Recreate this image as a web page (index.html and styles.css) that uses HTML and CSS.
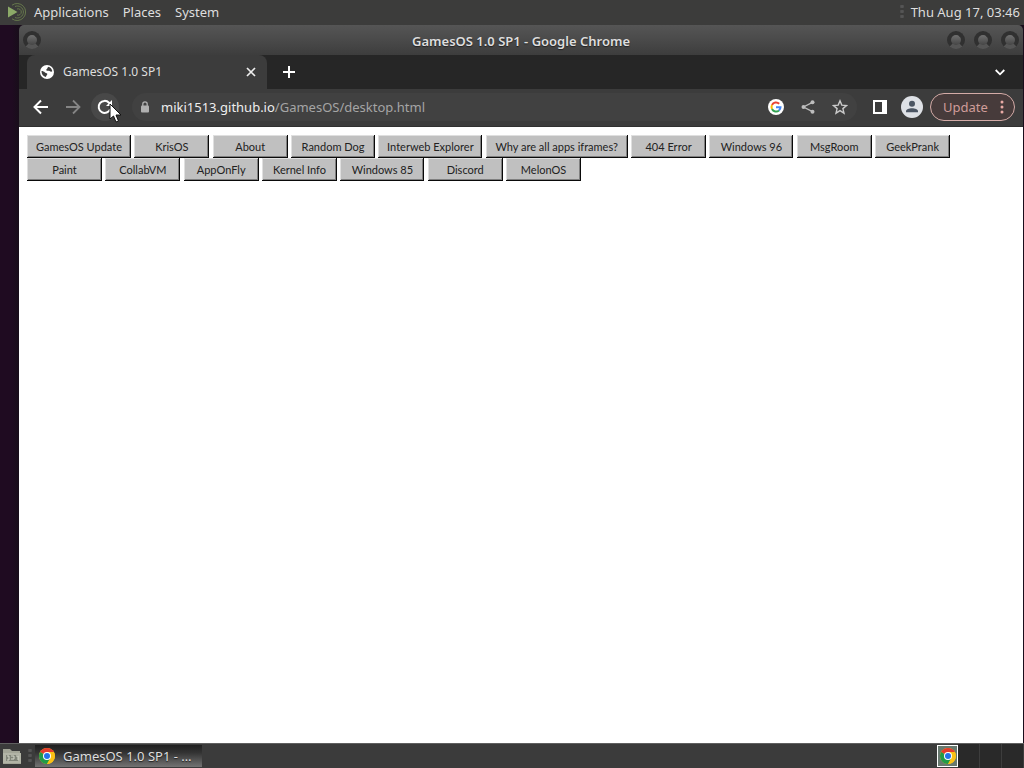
FILE: index.html
```html
<!DOCTYPE html>
<html lang="en">
<head>
<meta charset="utf-8">
<title>GamesOS 1.0 SP1</title>
<link rel="stylesheet" href="styles.css">
</head>
<body>
<svg width="0" height="0" class="defs" aria-hidden="true">
  <symbol id="chrome" viewBox="0 0 16 16">
    <circle cx="8" cy="8" r="8" fill="#fbc116"/>
    <path d="M8 8 1.1 4A8 8 0 0 1 14.9 4Z" fill="#e33b2e"/>
    <path d="M1.1 4A8 8 0 0 0 8 16L11.4 10 8 8Z" fill="#229a48"/>
    <path d="M8 4h6.9A8 8 0 0 1 8 16l3.5-6Z" fill="#fbc116"/>
    <circle cx="8" cy="8" r="4" fill="#fff"/>
    <circle cx="8" cy="8" r="3" fill="#2472e8"/>
  </symbol>
</svg>
<header class="panel">
  <nav class="menus">
    <svg class="mate" width="20" height="20" viewBox="0 0 20 20" fill="none" stroke="#66784c" stroke-width="1"><path d="M1 4.500 10.500 10 1 15.500Z" fill="#8caa68" stroke="none"/><path d="M5 3.200A8.500 8.500 0 1 1 5 16.800M8 4.500A6 6 0 1 1 8 15.500M10 7A3.200 3.200 0 1 1 10 13"/></svg>
    <button>Applications</button><button>Places</button><button>System</button>
  </nav>
  <div class="clock"><span class="grip"></span><time>Thu Aug 17, 03:46</time></div>
</header>
<main class="desktop">
  <section class="window">
    <div class="titlebar">
      <div class="side"><button class="knob" aria-label="Window menu"></button></div>
      <h1>GamesOS 1.0 SP1 - Google Chrome</h1>
      <div class="side right"><button class="knob" aria-label="Minimize"></button><button class="knob" aria-label="Maximize"></button><button class="knob" aria-label="Close"></button></div>
    </div>
    <div class="tabs">
      <div class="tab">
        <svg width="14" height="14" viewBox="0 0 14 14"><circle cx="7" cy="7" r="7" fill="#fff"/><path d="M1.500 6C3 6 4 6.500 5 7.500s2.500.2 2.300 1.700S6 10 6 12C3 11.500 1.500 9 1.500 6ZM8 1.700c2.500.4 4 2.300 4.300 4.600-1 .9-2 .2-2.700-.3S7 6.200 6.300 5.300 7.800 3.500 8 1.700Z" fill="#3c3c3c"/></svg>
        <span>GamesOS 1.0 SP1</span>
        <button class="icon" aria-label="Close tab"><svg width="10" height="10" viewBox="0 0 10 10" stroke="#eee" stroke-width="1.700"><path d="M1 1l8 8M9 1 1 9"/></svg></button>
      </div>
      <button class="icon plus" aria-label="New tab"><svg width="12" height="12" viewBox="0 0 12 12" stroke="#fff" stroke-width="2"><path d="M6 0v12M0 6h12"/></svg></button>
      <button class="icon chevron" aria-label="Search tabs"><svg width="10" height="7" viewBox="0 0 10 7" fill="none" stroke="#fff" stroke-width="1.800"><path d="m.7 1 4.300 4.300L9.300 1"/></svg></button>
    </div>
    <div class="toolbar">
      <button class="icon" aria-label="Back"><svg width="16" height="16" viewBox="0 0 16 16" fill="none" stroke="#fff" stroke-width="2"><path d="M15 8H2M8 1.500 1.500 8 8 14.500"/></svg></button>
      <button class="icon" aria-label="Forward"><svg width="16" height="16" viewBox="0 0 16 16" fill="none" stroke="#858585" stroke-width="1.800"><path d="M1 8h13M8 1.500 14.500 8 8 14.500"/></svg></button>
      <button class="icon reload" aria-label="Reload"><svg width="16" height="16" viewBox="0 0 16 16" fill="none" stroke="#fff" stroke-width="2"><path d="M13.300 10A6 6 0 1 1 12 3.700l1 1.200"/><path d="M15 1v6H9Z" fill="#fff" stroke="none"/></svg>
        <svg class="cursor" width="16" height="22" viewBox="0 0 16 22"><path d="M1 1v15l3.500-3 2.500 6 2.500-1L7 12h5Z" fill="#fff" stroke="#111"/></svg></button>
      <div class="omnibox">
        <svg width="10" height="12" viewBox="0 0 10 12" fill="none"><rect x="1" y="4.500" width="8" height="7" rx="1" fill="#b0b0b0"/><path d="M2.800 5V3a2.200 2.200 0 0 1 4.400 0v2" stroke="#b0b0b0" stroke-width="1.300"/></svg>
        <a class="url" href="#">miki1513.github.io<span>/GamesOS/desktop.html</span></a>
        <button class="icon" aria-label="Google"><svg width="16" height="16" viewBox="0 0 16 16" fill="none" stroke-width="2"><circle cx="8" cy="8" r="8" fill="#fff"/><path d="M11.200 4.800A4.500 4.500 0 0 0 4 6" stroke="#e94235"/><path d="M4 6a4.500 4.500 0 0 0 0 4" stroke="#fabb05"/><path d="M4 10a4.500 4.500 0 0 0 7 1.400" stroke="#34a353"/><path d="M8 8.200h4.500a4.500 4.500 0 0 1-1.500 3.200" stroke="#4285f4"/></svg></button>
        <button class="icon" aria-label="Share"><svg width="14" height="14" viewBox="0 0 14 14" fill="#bdbdbd"><path d="M11.500 2.300 2.500 7l9 4.700" fill="none" stroke="#bdbdbd" stroke-width="1.300"/><circle cx="11.500" cy="2.300" r="2"/><circle cx="2.500" cy="7" r="2"/><circle cx="11.500" cy="11.700" r="2"/></svg></button>
        <button class="icon" aria-label="Bookmark"><svg width="16" height="16" viewBox="0 0 16 16" fill="none" stroke="#cacaca" stroke-width="1.400"><path d="m8 1.800 1.800 4.300 4.700.4-3.600 3.100 1.100 4.600L8 11.700l-4 2.500 1.100-4.600L1.500 6.500l4.700-.4Z"/></svg></button>
      </div>
      <button class="icon" aria-label="Side panel"><svg width="14" height="14" viewBox="0 0 14 14"><path fill="#fff" fill-rule="evenodd" d="M0 0h14v14H0ZM2 2v10h7V2Z"/></svg></button>
      <button class="icon" aria-label="Profile"><svg width="22" height="22" viewBox="0 0 22 22"><circle cx="11" cy="11" r="11" fill="#dee1e6"/><circle cx="11" cy="7.800" r="3" fill="#4b5563"/><path d="M5 16.300v-1.100c0-4 12-4 12 0v1.100Z" fill="#4b5563"/></svg></button>
      <button class="update">Update <svg width="4" height="14" viewBox="0 0 4 14" fill="#e9aaa5"><circle cx="2" cy="2" r="1.500"/><circle cx="2" cy="7" r="1.500"/><circle cx="2" cy="12" r="1.500"/></svg></button>
    </div>
    <div class="page">
      <button class="app wide">GamesOS Update</button>
      <button class="app">KrisOS</button>
      <button class="app">About</button>
      <button class="app medium">Random Dog</button>
      <button class="app wide">Interweb Explorer</button>
      <button class="app widest">Why are all apps iframes?</button>
      <button class="app">404 Error</button>
      <button class="app medium">Windows 96</button>
      <button class="app">MsgRoom</button>
      <button class="app">GeekPrank</button>
      <button class="app">Paint</button>
      <button class="app">CollabVM</button>
      <button class="app">AppOnFly</button>
      <button class="app">Kernel Info</button>
      <button class="app medium">Windows 85</button>
      <button class="app">Discord</button>
      <button class="app">MelonOS</button>
    </div>
  </section>
</main>
<footer class="taskbar">
  <button class="icon files" aria-label="Show desktop"><svg width="20" height="18" viewBox="0 0 20 18"><path d="M1 2h7l2 2h8v3h1v10H1Z" fill="#a3a597"/><path d="M1 6h18v10H1Z" fill="#b2b4a6"/><path d="M4 8h12v6H4Z" fill="#818579"/><path d="M5 9h2v4H5m4-4h3v3H9m5-3h2v4" fill="none" stroke="#d4d6c9"/></svg></button>
  <span class="grip"></span>
  <button class="task"><svg width="16" height="16"><use href="#chrome"/></svg><span>GamesOS 1.0 SP1 - …</span></button>
  <button class="tray" aria-label="Google Chrome"><svg width="16" height="16"><use href="#chrome"/></svg></button>
  <div class="spaces"><i></i><i></i><i></i></div>
</footer>
</body>
</html>
```
FILE: styles.css
```css
* { box-sizing: border-box; }
body {
  margin: 0;
  height: 100vh;
  display: flex;
  flex-direction: column;
  overflow: hidden;
  background: #1d0b20;
  color: #dedede;
  font: 13px/20px "Noto Sans", sans-serif;
}
button { margin: 0; padding: 0; border: 0; background: none; color: inherit; font: inherit; }
svg { display: block; flex: none; }
.defs { position: absolute; }
.panel {
  height: 25px;
  flex: none;
  display: flex;
  align-items: center;
  justify-content: space-between;
  padding: 0 4px 2px 7px;
  background: #3c3c3b;
}
.menus { display: flex; align-items: center; gap: 14px; }
.mate { margin-right: -7px; }
.clock { display: flex; align-items: center; gap: 7px; }
.grip { width: 4px; height: 16px; flex: none; background: radial-gradient(circle, #555 1px, #484848 2px, transparent 2px) 0 0 / 4px 5px; }
.desktop { flex: 1; min-height: 0; display: flex; padding: 0 1px 0 19px; background: linear-gradient(90deg, #1f0b21 12px, #190d1b 18px); }
.window { flex: 1; min-width: 0; display: flex; flex-direction: column; }
.titlebar {
  height: 30px;
  flex: none;
  display: flex;
  align-items: center;
  padding: 0 4px;
  border-radius: 5px 5px 0 0;
  background: linear-gradient(#555, #4b4b4b 45%, #3d3d3d);
}
.titlebar h1 { margin: 0; padding-top: 2px; font-size: 13px; line-height: 20px; font-weight: 600; text-shadow: 0 1px 1px #222; }
.side { flex: 1; display: flex; gap: 9px; }
.right { justify-content: flex-end; }
.knob { width: 18px; height: 18px; border: 4px solid #303030; border-bottom-color: #555; border-radius: 50%; background: linear-gradient(#707070, #454545); }
.tabs { height: 34px; flex: none; display: flex; align-items: center; padding: 0 18px 0 8px; background: #262626; }
.tab { width: 240px; height: 34px; display: flex; align-items: center; gap: 9px; padding: 0 11px 0 13px; border-radius: 8px 8px 0 0; background: #3c3c3c; font-size: 12px; }
.tab span { flex: 1; }
.icon { display: grid; place-items: center; flex: none; }
.plus { margin-left: 16px; }
.chevron { margin-left: auto; }
.toolbar { height: 38px; flex: none; display: flex; align-items: center; padding: 0 8px 2px 14px; gap: 16px; background: #3c3c3c; border-bottom: 1px solid #303030; }
.reload { position: relative; width: 28px; height: 28px; margin: 0 -6px; border-radius: 50%; background: #484848; }
.cursor { position: absolute; left: 18px; top: 10px; }
.omnibox { flex: 1; min-width: 0; height: 28px; display: flex; align-items: center; gap: 17px; margin-left: 3px; padding: 0 9px 0 8px; border-radius: 14px; background: #414141; }
.omnibox + .icon { margin-right: -2px; }
.url { flex: 1; margin-left: -6px; color: #eee; text-decoration: none; }
.url span { color: #a5a5a5; }
.update { width: 85px; height: 28px; flex: none; display: flex; align-items: center; justify-content: space-between; margin-left: -9px; padding: 0 10px 0 12px; border: 1px solid #d4aba7; border-radius: 14px; background: #473b3b; color: #d09d9a; }
.page { flex: 1; padding: 8px; background: #fff; font: 12px/23px "Liberation Sans", Arial, sans-serif; }
.app {
  min-width: 75px;
  height: 23px;
  padding: 0 5px;
  vertical-align: top;
  background: #c0c0c0;
  color: #222;
  font: 11px/23px Lato, sans-serif;
  white-space: nowrap;
  box-shadow: inset -1px -1px #0a0a0a, inset 1px 1px #dfdfdf, inset -2px -2px #808080;
}
.medium { min-width: 84px; }
.wide { min-width: 104px; }
.widest { min-width: 142px; }
.taskbar { height: 25px; flex: none; display: flex; align-items: center; padding-left: 2px; border-top: 1px solid #606060; background: #3b3b3b; }
.files { margin-right: 6px; }
.task { width: 167px; height: 22px; display: flex; align-items: center; gap: 8px; margin-left: 3px; padding: 0 8px 0 4px; background: linear-gradient(#202020, #333 35%, #737373); text-shadow: 0 1px 1px #222; }
.task span { white-space: nowrap; }
.tray { width: 21px; height: 22px; display: grid; place-items: center; margin-left: auto; border: 1px solid #fff; background: #68796f; }
.spaces { width: 66px; height: 24px; display: grid; grid-template-columns: repeat(3, 1fr); background: #292929; }
.spaces i { border-right: 1px solid #3d3d3d; }
```
